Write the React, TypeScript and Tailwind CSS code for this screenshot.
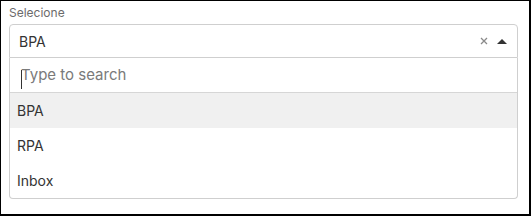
import { useState } from "react";

const options = ["BPA", "RPA", "Inbox"];

export default function App() {
  const [selected] = useState("BPA");
  const [query, setQuery] = useState("");

  return (
    <div className="h-[216px] w-[531px] border-b-2 border-l border-r-2 border-t border-black bg-white font-['Inter',sans-serif]">
      <div className="px-2 pt-[5px]">
        <p className="text-[12px] leading-[14px] text-[#6b6b6b]">Selecione</p>

        <div className="mt-[4px] w-[509px]">
          <div className="flex h-[34px] items-center rounded-t-[4px] border border-[#cfcfcf] pl-[9px] pr-[10px]">
            <span className="flex-1 text-[14px] text-[#333]">{selected}</span>
            <svg width="8" height="8" viewBox="0 0 8 8" className="mr-[9px]">
              <path d="M1 1L7 7M7 1L1 7" stroke="#8a8a8a" strokeWidth="1.3" />
            </svg>
            <svg width="10" height="5" viewBox="0 0 10 5">
              <path d="M0 5L5 0L10 5Z" fill="#333" />
            </svg>
          </div>

          <div className="rounded-b-[4px] border border-t-0 border-[#cfcfcf]">
            <div className="relative flex h-[35px] items-center border-b border-[#d6d6d6] pl-[11px]">
              <span className="absolute left-[11px] top-[12px] h-[19px] w-px bg-[#333]" />
              <input
                className="w-full bg-transparent text-[15px] text-[#333] outline-none placeholder:text-[#7a7a7a]"
                onChange={(event) => setQuery(event.target.value)}
                placeholder="Type to search"
                value={query}
              />
            </div>
            <ul>
              {options.map((option) => (
                <li
                  className={`flex h-[35px] items-center pl-[7px] text-[14px] text-[#333] ${option === selected ? "bg-[#f0f0f0]" : ""}`}
                  key={option}
                >
                  {option}
                </li>
              ))}
            </ul>
          </div>
        </div>
      </div>
    </div>
  );
}
